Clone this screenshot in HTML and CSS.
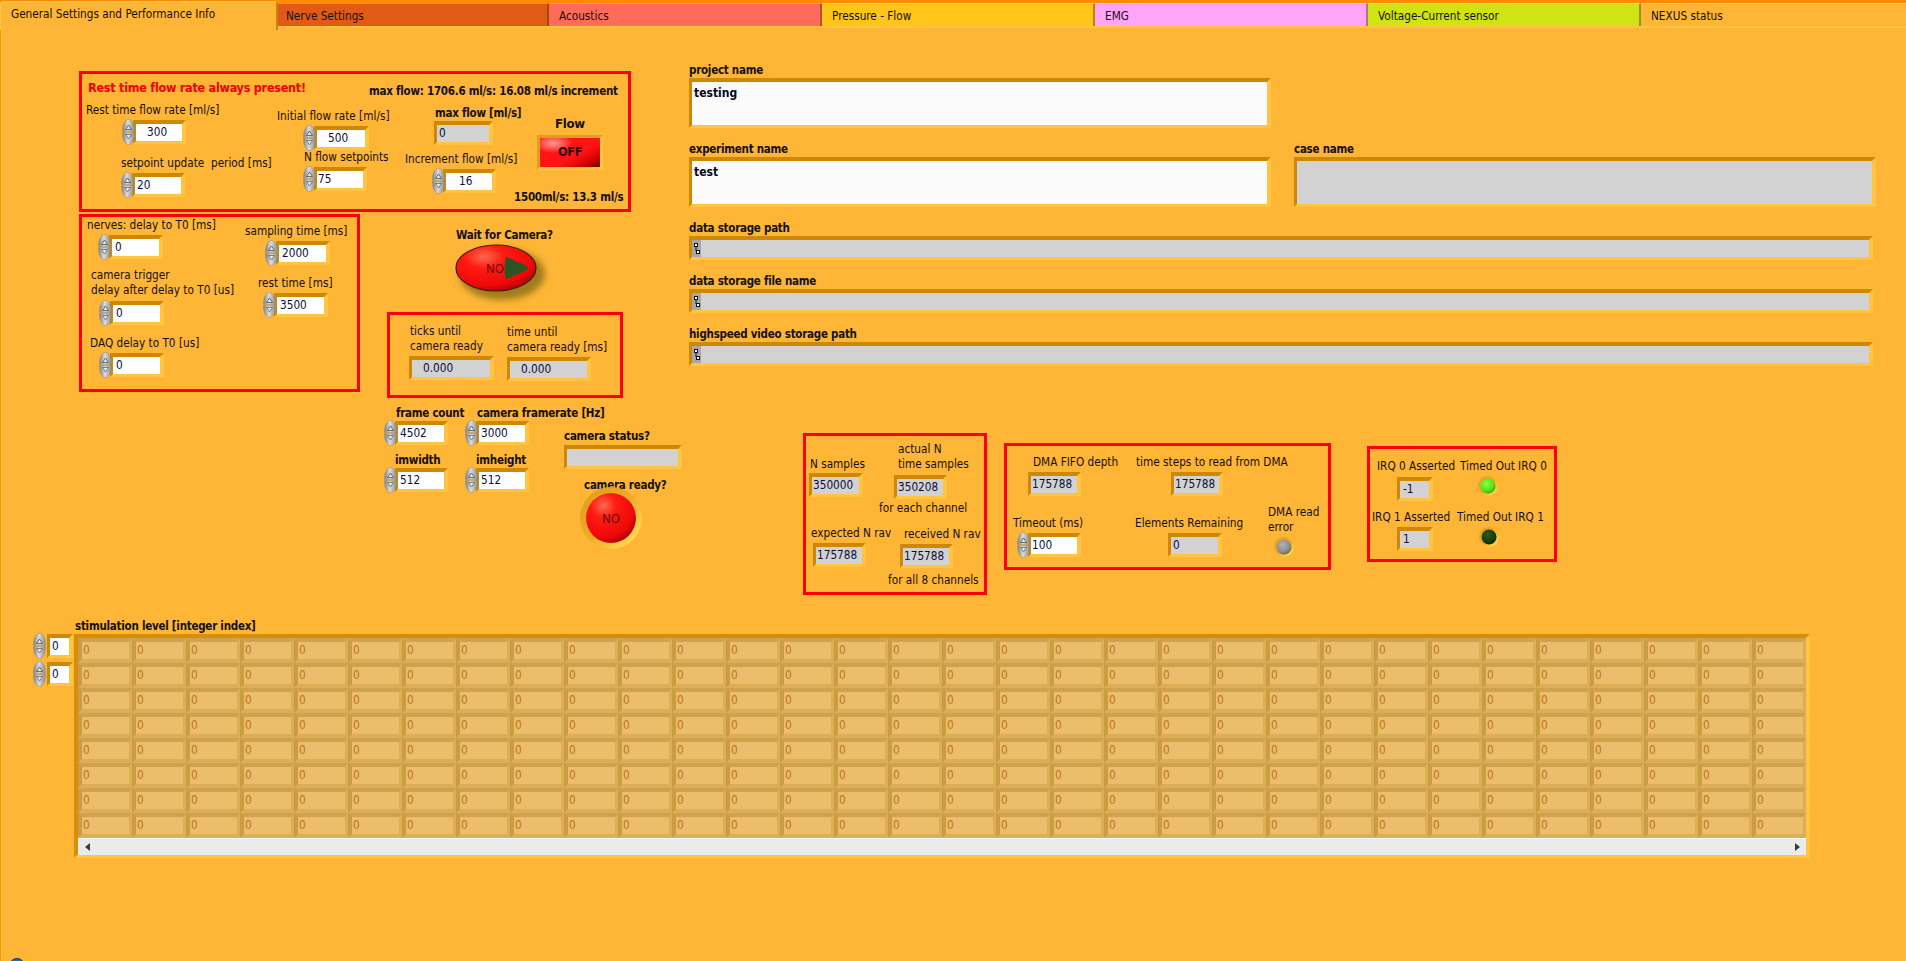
FILE: index.html
```html
<!DOCTYPE html>
<html lang="en">
<head>
<meta charset="utf-8">
<title>General Settings and Performance Info</title>
<link rel="stylesheet" href="styles.css">
</head>
<body>
<svg class="defs" aria-hidden="true">
  <defs>
    <linearGradient id="spinGrad" x1="0" x2="1" y1="0" y2="0">
      <stop offset="0" stop-color="#7f7f7f"/><stop offset=".45" stop-color="#dcdcdc"/><stop offset="1" stop-color="#8c8c8c"/>
    </linearGradient>
    <radialGradient id="redLed" cx=".35" cy=".25" r=".85">
      <stop offset="0" stop-color="#ff6a50"/><stop offset=".3" stop-color="#ff1a12"/><stop offset=".75" stop-color="#ee0808"/><stop offset="1" stop-color="#8c0606"/>
    </radialGradient>
    <linearGradient id="halo" x1="0" y1="0" x2="1" y2="1">
      <stop offset="0" stop-color="#e09a18"/><stop offset=".5" stop-color="#f0ac28"/><stop offset="1" stop-color="#ffe860"/>
    </linearGradient>
    <radialGradient id="ledGreen" cx=".4" cy=".35" r=".7">
      <stop offset="0" stop-color="#88ff50"/><stop offset=".7" stop-color="#50e010"/><stop offset="1" stop-color="#30a010"/>
    </radialGradient>
    <radialGradient id="ledDark" cx=".4" cy=".35" r=".7">
      <stop offset="0" stop-color="#2c5a1c"/><stop offset=".7" stop-color="#143a0c"/><stop offset="1" stop-color="#0c2408"/>
    </radialGradient>
    <radialGradient id="ledGrey" cx=".4" cy=".35" r=".7">
      <stop offset="0" stop-color="#b4b4b4"/><stop offset=".7" stop-color="#8a8a8a"/><stop offset="1" stop-color="#5c5c5c"/>
    </radialGradient>
    <filter id="soft" x="-25%" y="-25%" width="150%" height="150%"><feGaussianBlur stdDeviation="3"/></filter>
    <symbol id="spin" viewBox="0 0 13 26">
      <path d="M.5 12.4C.5 5 3 .5 6.5 .5S12.5 5 12.5 12.4Z" fill="url(#spinGrad)" stroke="#8a8a8a" stroke-width=".5"/>
      <path d="M.5 13.6C.5 21 3 25.5 6.5 25.5S12.5 21 12.5 13.6Z" fill="url(#spinGrad)" stroke="#8a8a8a" stroke-width=".5"/>
      <path d="M6.5 6 9.5 10.5H3.5Z" fill="#e4e4e4" stroke="#3c3c3c" stroke-width=".7"/>
      <path d="M6.5 20 9.5 15.5H3.5Z" fill="#e4e4e4" stroke="#5a5a5a" stroke-width=".7"/>
    </symbol>
    <symbol id="pathIcon" viewBox="0 0 9 17">
      <rect width="9" height="17" fill="#a8a8a8"/>
      <path d="M4 7V11H5" fill="none" stroke="#111" stroke-width="1"/>
      <rect x="2.5" y="3.5" width="3" height="3" fill="#fff" stroke="#111"/>
      <rect x="4.5" y="10.5" width="3" height="3" fill="#fff" stroke="#111"/>
    </symbol>
  </defs>
</svg>

<div class="app">
  <nav class="tabs">
    <div class="tab tab-general">General Settings and Performance Info</div>
    <div class="tab tab-nerve">Nerve Settings</div>
    <div class="tab tab-acoustics">Acoustics</div>
    <div class="tab tab-pressure">Pressure - Flow</div>
    <div class="tab tab-emg">EMG</div>
    <div class="tab tab-voltage">Voltage-Current sensor</div>
    <div class="tab tab-nexus">NEXUS status</div>
  </nav>

  <main class="canvas">
    <section class="frame f-flow">
      <div class="lb warn a1">Rest time flow rate always present!</div>
      <div class="lb bold a2">max flow: 1706.6 ml/s: 16.08 ml/s increment</div>
      <div class="lb a3">Rest time flow rate [ml/s]</div>
      <div class="num a4"><svg class="spin"><use href="#spin"/></svg><div class="box w46 p11">300</div></div>
      <div class="lb a5">setpoint update&nbsp; period [ms]</div>
      <div class="num a6"><svg class="spin"><use href="#spin"/></svg><div class="box w46 p2">20</div></div>
      <div class="lb a7">Initial flow rate [ml/s]</div>
      <div class="num a8"><svg class="spin"><use href="#spin"/></svg><div class="box w48 p11">500</div></div>
      <div class="lb a9">N flow setpoints</div>
      <div class="num a10"><svg class="spin"><use href="#spin"/></svg><div class="box w46 p1">75</div></div>
      <div class="lb bold a11">max flow [ml/s]</div>
      <div class="ind a12 w52 p2">0</div>
      <div class="lb a13">Increment flow [ml/s]</div>
      <div class="num a14"><svg class="spin"><use href="#spin"/></svg><div class="box w46 p13">16</div></div>
      <div class="lb bold big a15">Flow</div>
      <div class="off a16">OFF</div>
      <div class="lb bold a17">1500ml/s: 13.3 ml/s</div>
    </section>

    <section class="frame f-times">
      <div class="lb b1">nerves: delay to T0 [ms]</div>
      <div class="num b2"><svg class="spin"><use href="#spin"/></svg><div class="box w47 p3">0</div></div>
      <div class="lb b3">sampling time [ms]</div>
      <div class="num b4"><svg class="spin"><use href="#spin"/></svg><div class="box w47 p3">2000</div></div>
      <div class="lb b5">camera trigger<br>delay after delay to T0 [us]</div>
      <div class="num b6"><svg class="spin"><use href="#spin"/></svg><div class="box w47 p3">0</div></div>
      <div class="lb b7">rest time [ms]</div>
      <div class="num b8"><svg class="spin"><use href="#spin"/></svg><div class="box w47 p3">3500</div></div>
      <div class="lb b9">DAQ delay to T0 [us]</div>
      <div class="num b10"><svg class="spin"><use href="#spin"/></svg><div class="box w47 p3">0</div></div>
    </section>

    <div class="lb bold c1">Wait for Camera?</div>
    <svg class="oval" viewBox="0 0 104 66">
      <ellipse cx="52" cy="34" rx="43" ry="26" fill="#a07c1c" filter="url(#soft)"/>
      <ellipse cx="46" cy="28" rx="40" ry="23" fill="url(#redLed)" stroke="#4a1a10" stroke-width="1.2"/>
      <path d="M56 16.5 77 26Q79 28 77 30L56 39.5Q53 28 56 16.5Z" fill="#2f5222"/>
      <text class="led-text" x="45" y="33" text-anchor="middle">NO</text>
    </svg>

    <section class="frame f-ticks">
      <div class="lb d1">ticks until<br>camera ready</div>
      <div class="ind d2 w78 p11">0.000</div>
      <div class="lb d3">time until<br>camera ready [ms]</div>
      <div class="ind d4 w77 p11">0.000</div>
    </section>

    <div class="lb bold e1">frame count</div>
    <div class="num e2"><svg class="spin"><use href="#spin"/></svg><div class="box w46 p2">4502</div></div>
    <div class="lb bold e3">camera framerate [Hz]</div>
    <div class="num e4"><svg class="spin"><use href="#spin"/></svg><div class="box w46 p2">3000</div></div>
    <div class="lb bold e5">imwidth</div>
    <div class="num e6"><svg class="spin"><use href="#spin"/></svg><div class="box w46 p2">512</div></div>
    <div class="lb bold e7">imheight</div>
    <div class="num e8"><svg class="spin"><use href="#spin"/></svg><div class="box w46 p2">512</div></div>
    <div class="lb bold e9">camera status?</div>
    <div class="ind e10 w111 p2"></div>
    <div class="lb bold e11">camera ready?</div>
    <svg class="round" viewBox="0 0 64 64">
      <circle cx="32" cy="32" r="31" fill="url(#halo)"/>
      <circle cx="32" cy="32" r="25" fill="url(#redLed)"/>
      <text class="led-text" x="32" y="37" text-anchor="middle">NO</text>
    </svg>

    <section class="names">
      <div class="field n-project"><div class="fl">project name</div><div class="text-box white">testing</div></div>
      <div class="field n-experiment"><div class="fl">experiment name</div><div class="text-box white">test</div></div>
      <div class="field n-case"><div class="fl">case name</div><div class="text-box grey"></div></div>
      <div class="field n-path"><div class="fl">data storage path</div><div class="path-box"><svg class="path-icon"><use href="#pathIcon"/></svg></div></div>
      <div class="field n-path"><div class="fl">data storage file name</div><div class="path-box"><svg class="path-icon"><use href="#pathIcon"/></svg></div></div>
      <div class="field n-path"><div class="fl">highspeed video storage path</div><div class="path-box"><svg class="path-icon"><use href="#pathIcon"/></svg></div></div>
    </section>

    <section class="frame f-samples">
      <div class="lb g1">N samples</div>
      <div class="ind g2 w47 p1">350000</div>
      <div class="lb g3">actual N<br>time samples</div>
      <div class="ind g4 w46 p1">350208</div>
      <div class="lb g5">for each channel</div>
      <div class="lb g6">expected N rav</div>
      <div class="ind g7 w46 p1">175788</div>
      <div class="lb g8">received N rav</div>
      <div class="ind g9 w46 p1">175788</div>
      <div class="lb g10">for all 8 channels</div>
    </section>

    <section class="frame f-dma">
      <div class="lb h1">DMA FIFO depth</div>
      <div class="ind h2 w46 p1">175788</div>
      <div class="lb h3">time steps to read from DMA</div>
      <div class="ind h4 w45 p1">175788</div>
      <div class="lb h5">Timeout (ms)</div>
      <div class="num h6"><svg class="spin"><use href="#spin"/></svg><div class="box w46 p1">100</div></div>
      <div class="lb h7">Elements Remaining</div>
      <div class="ind h8 w47 p2">0</div>
      <div class="lb h9">DMA read<br>error</div>
      <svg class="led h10" viewBox="0 0 20 20"><circle cx="10" cy="10" r="10" fill="url(#halo)"/><circle cx="10" cy="10" r="7.5" fill="url(#ledGrey)"/></svg>
    </section>

    <section class="frame f-irq">
      <div class="lb i1">IRQ 0 Asserted</div>
      <div class="ind i2 w29 p3">-1</div>
      <div class="lb i3">Timed Out IRQ 0</div>
      <svg class="led i4" viewBox="0 0 20 20"><circle cx="10" cy="10" r="10" fill="url(#halo)"/><circle cx="10" cy="10" r="7.5" fill="url(#ledGreen)"/></svg>
      <div class="lb i5">IRQ 1 Asserted</div>
      <div class="ind i6 w29 p3">1</div>
      <div class="lb i7">Timed Out IRQ 1</div>
      <svg class="led i8" viewBox="0 0 20 20"><circle cx="10" cy="10" r="10" fill="url(#halo)"/><circle cx="10" cy="10" r="7.5" fill="url(#ledDark)"/></svg>
    </section>

    <div class="num idx j1"><svg class="spin"><use href="#spin"/></svg><div class="box w20 p2">0</div></div>
    <div class="num idx j2"><svg class="spin"><use href="#spin"/></svg><div class="box w20 p2">0</div></div>

    <section class="array-wrap">
      <div class="lb-flow bold">stimulation level [integer index]</div>
      <div class="array">
        <div class="cells">
          <span>0</span><span>0</span><span>0</span><span>0</span><span>0</span><span>0</span><span>0</span><span>0</span><span>0</span><span>0</span><span>0</span><span>0</span><span>0</span><span>0</span><span>0</span><span>0</span><span>0</span><span>0</span><span>0</span><span>0</span><span>0</span><span>0</span><span>0</span><span>0</span><span>0</span><span>0</span><span>0</span><span>0</span><span>0</span><span>0</span><span>0</span><span>0</span>
          <span>0</span><span>0</span><span>0</span><span>0</span><span>0</span><span>0</span><span>0</span><span>0</span><span>0</span><span>0</span><span>0</span><span>0</span><span>0</span><span>0</span><span>0</span><span>0</span><span>0</span><span>0</span><span>0</span><span>0</span><span>0</span><span>0</span><span>0</span><span>0</span><span>0</span><span>0</span><span>0</span><span>0</span><span>0</span><span>0</span><span>0</span><span>0</span>
          <span>0</span><span>0</span><span>0</span><span>0</span><span>0</span><span>0</span><span>0</span><span>0</span><span>0</span><span>0</span><span>0</span><span>0</span><span>0</span><span>0</span><span>0</span><span>0</span><span>0</span><span>0</span><span>0</span><span>0</span><span>0</span><span>0</span><span>0</span><span>0</span><span>0</span><span>0</span><span>0</span><span>0</span><span>0</span><span>0</span><span>0</span><span>0</span>
          <span>0</span><span>0</span><span>0</span><span>0</span><span>0</span><span>0</span><span>0</span><span>0</span><span>0</span><span>0</span><span>0</span><span>0</span><span>0</span><span>0</span><span>0</span><span>0</span><span>0</span><span>0</span><span>0</span><span>0</span><span>0</span><span>0</span><span>0</span><span>0</span><span>0</span><span>0</span><span>0</span><span>0</span><span>0</span><span>0</span><span>0</span><span>0</span>
          <span>0</span><span>0</span><span>0</span><span>0</span><span>0</span><span>0</span><span>0</span><span>0</span><span>0</span><span>0</span><span>0</span><span>0</span><span>0</span><span>0</span><span>0</span><span>0</span><span>0</span><span>0</span><span>0</span><span>0</span><span>0</span><span>0</span><span>0</span><span>0</span><span>0</span><span>0</span><span>0</span><span>0</span><span>0</span><span>0</span><span>0</span><span>0</span>
          <span>0</span><span>0</span><span>0</span><span>0</span><span>0</span><span>0</span><span>0</span><span>0</span><span>0</span><span>0</span><span>0</span><span>0</span><span>0</span><span>0</span><span>0</span><span>0</span><span>0</span><span>0</span><span>0</span><span>0</span><span>0</span><span>0</span><span>0</span><span>0</span><span>0</span><span>0</span><span>0</span><span>0</span><span>0</span><span>0</span><span>0</span><span>0</span>
          <span>0</span><span>0</span><span>0</span><span>0</span><span>0</span><span>0</span><span>0</span><span>0</span><span>0</span><span>0</span><span>0</span><span>0</span><span>0</span><span>0</span><span>0</span><span>0</span><span>0</span><span>0</span><span>0</span><span>0</span><span>0</span><span>0</span><span>0</span><span>0</span><span>0</span><span>0</span><span>0</span><span>0</span><span>0</span><span>0</span><span>0</span><span>0</span>
          <span>0</span><span>0</span><span>0</span><span>0</span><span>0</span><span>0</span><span>0</span><span>0</span><span>0</span><span>0</span><span>0</span><span>0</span><span>0</span><span>0</span><span>0</span><span>0</span><span>0</span><span>0</span><span>0</span><span>0</span><span>0</span><span>0</span><span>0</span><span>0</span><span>0</span><span>0</span><span>0</span><span>0</span><span>0</span><span>0</span><span>0</span><span>0</span>
        </div>
        <div class="scrollbar"><b class="arrow-left"></b><b class="arrow-right"></b></div>
      </div>
    </section>
  </main>
  <div class="orb"></div>
</div>
</body>
</html>
```
FILE: styles.css
```css
* { box-sizing: border-box; }
html, body { margin: 0; padding: 0; }
body { background: #ffb536; font-family: "DejaVu Sans Condensed", "DejaVu Sans", sans-serif; font-size: 11.7px; color: #141008; }
.defs { position: absolute; width: 0; height: 0; }

.app { position: relative; width: 1906px; height: 961px; overflow: hidden; background: #ffb536; box-shadow: inset 1px 0 #ff9400, inset 2px 0 #ffc442; }

/* tab strip */
.tabs { display: flex; height: 29px; background: linear-gradient(#ff8c00 0 3px, #ffb536 3px 26px, #ffc442 26px 28px, #ffb536 28px); }
.tab { height: 23px; margin-top: 3px; padding: 4px 0 0 10px; line-height: 16px; border-top: 1px solid rgba(255,255,255,.3); border-right: 2px solid rgba(90,50,0,.45); white-space: nowrap; }
.tab-general { position: relative; width: 278px; height: 29px; margin-top: 1px; padding: 3px 0 0 10px; background: #ffb536; border-top: 2px solid #ffc442; border-left: 1px solid #ffc442; border-right: 2px solid #c98410; border-radius: 3px 3px 0 0; }
.tab-nerve { width: 271px; padding-left: 8px; background: #e25b16; }
.tab-acoustics { width: 273px; background: #ff6b5a; }
.tab-pressure { width: 273px; background: #ffc518; }
.tab-emg { width: 273px; background: #ffa5f8; }
.tab-voltage { width: 273px; background: #d0e414; }
.tab-nexus { width: 265px; background: #ffb536; border-right: 0; }

/* red decoration frames */
.frame { position: absolute; box-shadow: inset 0 0 0 3px #ff0000; }
.f-flow { left: 79px; top: 71px; width: 552px; height: 141px; }
.f-times { left: 79px; top: 214px; width: 281px; height: 178px; }
.f-ticks { left: 387px; top: 312px; width: 236px; height: 86px; }
.f-samples { left: 803px; top: 433px; width: 184px; height: 162px; }
.f-dma { left: 1004px; top: 443px; width: 327px; height: 127px; }
.f-irq { left: 1367px; top: 446px; width: 190px; height: 116px; }

/* labels */
.lb { position: absolute; line-height: 16px; white-space: nowrap; }
.bold { font-weight: 700; font-size: 11.5px; letter-spacing: -.25px; }
.big { font-size: 13px; }
.warn { font-weight: 700; font-size: 12.5px; letter-spacing: -.25px; color: #f20000; }

/* numeric controls */
.num { position: absolute; display: flex; align-items: center; height: 26px; }
.spin { width: 13px; height: 26px; flex: none; position: relative; z-index: 1; }
.box, .ind { height: 24px; border-style: solid; border-width: 4px 4px 3px 3px; border-color: #cf8706 #ffc442 #ffc442 #cf8706; line-height: 17px; color: #0c0c3c; white-space: nowrap; }
.box { margin-left: -2px; background: #fff; background-clip: padding-box; }
.ind { position: absolute; background: #d2d2d2; background-clip: padding-box; }
.idx .box { margin-left: 1px; }
.w20 { width: 26px; }
.w29 { width: 36px; }
.w45 { width: 52px; }
.w46 { width: 53px; }
.w47 { width: 54px; }
.w48 { width: 55px; }
.w52 { width: 59px; }
.w77 { width: 84px; }
.w78 { width: 85px; }
.w111 { width: 118px; }
.p1 { padding-left: 1px; }
.p2 { padding-left: 2px; }
.p3 { padding-left: 3px; }
.p11 { padding-left: 11px; }
.p13 { padding-left: 13px; }

/* flow frame */
.a1 { left: 9px; top: 9px; }
.a2 { left: 290px; top: 12px; }
.a3 { left: 7px; top: 31px; }
.a4 { left: 43px; top: 48px; }
.a5 { left: 42px; top: 84px; }
.a6 { left: 42px; top: 101px; }
.a7 { left: 198px; top: 37px; }
.a8 { left: 224px; top: 54px; }
.a9 { left: 225px; top: 78px; }
.a10 { left: 224px; top: 95px; }
.a11 { left: 356px; top: 34px; }
.a12 { left: 355px; top: 50px; }
.a13 { left: 326px; top: 80px; }
.a14 { left: 353px; top: 97px; }
.a15 { left: 476px; top: 45px; }
.a16 { left: 458px; top: 64px; }
.a17 { left: 435px; top: 118px; }
.off { position: absolute; width: 66px; height: 35px; border: 3px solid; border-color: #e59c1e #ffc442 #ffc442 #e59c1e; text-align: center; line-height: 28px; font-size: 12.5px; font-weight: 700; letter-spacing: -.3px; color: #2a0606;
  background: radial-gradient(ellipse 20px 10px at 22% 18%, #ff9a90, rgba(255,60,50,0) 100%), linear-gradient(150deg, #ff1414 0 60%, #e00404 78%, #7c0000 100%); background-clip: padding-box; }

/* times frame */
.b1 { left: 8px; top: 3px; }
.b2 { left: 19px; top: 20px; }
.b3 { left: 166px; top: 9px; }
.b4 { left: 186px; top: 26px; }
.b5 { left: 12px; top: 54px; line-height: 15px; }
.b6 { left: 20px; top: 86px; }
.b7 { left: 179px; top: 61px; }
.b8 { left: 184px; top: 78px; }
.b9 { left: 11px; top: 121px; }
.b10 { left: 20px; top: 138px; }

/* camera block */
.c1 { left: 456px; top: 227px; }
.oval { position: absolute; left: 450px; top: 240px; width: 104px; height: 66px; }
.round { position: absolute; left: 579px; top: 486px; width: 64px; height: 64px; }
.led-text { font-family: "DejaVu Sans Condensed", "DejaVu Sans", sans-serif; font-size: 13px; fill: #6a0c0c; }
.d1 { left: 23px; top: 12px; line-height: 15px; }
.d2 { left: 22px; top: 44px; }
.d3 { left: 120px; top: 13px; line-height: 15px; }
.d4 { left: 120px; top: 45px; }
.e1 { left: 396px; top: 405px; }
.e2 { left: 384px; top: 420px; }
.e3 { left: 477px; top: 405px; }
.e4 { left: 465px; top: 420px; }
.e5 { left: 395px; top: 452px; }
.e6 { left: 384px; top: 467px; }
.e7 { left: 476px; top: 452px; }
.e8 { left: 465px; top: 467px; }
.e9 { left: 564px; top: 428px; }
.e10 { left: 564px; top: 445px; }
.e11 { left: 584px; top: 477px; }

/* name and path fields */
.names { position: absolute; left: 689px; top: 62px; display: grid; grid-template-columns: 582px 23px 582px; row-gap: 13px; }
.field { display: flex; flex-direction: column; }
.fl { height: 16px; line-height: 16px; font-weight: 700; font-size: 11.5px; letter-spacing: -.25px; white-space: nowrap; }
.n-project, .n-experiment { grid-column: 1; }
.n-case { grid-column: 3; grid-row: 2; }
.n-path { grid-column: 1 / -1; width: 1184px; }
.text-box, .path-box { border-style: solid; border-width: 4px 4px 3px 3px; border-color: #cf8706 #ffc442 #ffc442 #cf8706; background-clip: padding-box; }
.text-box { height: 50px; padding-left: 2px; font-size: 12px; font-weight: 700; line-height: 22px; color: #06061e; }
.white { background-color: #fbfbfb; }
.grey { background-color: #d2d2d2; }
.path-box { height: 24px; background-color: #d2d2d2; display: flex; }
.path-icon { width: 9px; height: 17px; }

/* samples frame */
.g1 { left: 7px; top: 23px; }
.g2 { left: 6px; top: 40px; }
.g3 { left: 95px; top: 9px; line-height: 15px; }
.g4 { left: 91px; top: 42px; }
.g5 { left: 76px; top: 67px; }
.g6 { left: 8px; top: 92px; }
.g7 { left: 10px; top: 110px; }
.g8 { left: 101px; top: 93px; }
.g9 { left: 97px; top: 111px; }
.g10 { left: 85px; top: 139px; }

/* dma frame */
.h1 { left: 29px; top: 11px; }
.h2 { left: 24px; top: 29px; }
.h3 { left: 132px; top: 11px; }
.h4 { left: 167px; top: 29px; }
.h5 { left: 9px; top: 72px; }
.h6 { left: 13px; top: 89px; }
.h7 { left: 131px; top: 72px; }
.h8 { left: 164px; top: 90px; }
.h9 { left: 264px; top: 62px; line-height: 15px; }
.led { position: absolute; width: 20px; height: 20px; }
.h10 { left: 270px; top: 94px; }

/* irq frame */
.i1 { left: 10px; top: 12px; }
.i2 { left: 30px; top: 31px; }
.i3 { left: 93px; top: 12px; }
.i4 { left: 111px; top: 30px; }
.i5 { left: 5px; top: 63px; }
.i6 { left: 30px; top: 81px; }
.i7 { left: 90px; top: 63px; }
.i8 { left: 112px; top: 81px; }

/* array */
.j1 { left: 33px; top: 633px; }
.j2 { left: 33px; top: 661px; }
.array-wrap { position: absolute; left: 74px; top: 618px; }
.lb-flow { height: 16px; line-height: 16px; padding-left: 1px; white-space: nowrap; }
.array { width: 1736px; height: 224px; border-style: solid; border-width: 4px; border-color: #d98e0a #ffc442 #ffc442 #d98e0a; }
.cells { display: grid; grid-template-columns: repeat(32, 54px); grid-auto-rows: 25px; }
.cells span { border-style: solid; border-width: 4px 3px 4px 4px; border-color: #cfa250 #dcae58 #dcae58 #c99d45; background: #ecbd6a; background-clip: padding-box; padding-left: 1px; line-height: 17px; color: #b97626; }
.scrollbar { position: relative; height: 17px; background: #ebebeb; border-top: 1px solid #fff; }
.arrow-left, .arrow-right { position: absolute; top: 4px; border-style: solid; border-width: 4px 0; border-color: transparent; }
.arrow-left { left: 7px; border-right: 5px solid #3a3a3a; }
.arrow-right { right: 6px; border-left: 5px solid #3a3a3a; }

/* partial circle at the window's bottom edge */
.orb { position: absolute; left: 9px; top: 958px; width: 16px; height: 16px; border-radius: 50%; background: #1f6fa8; border: 1px solid #123c5c; }
```
